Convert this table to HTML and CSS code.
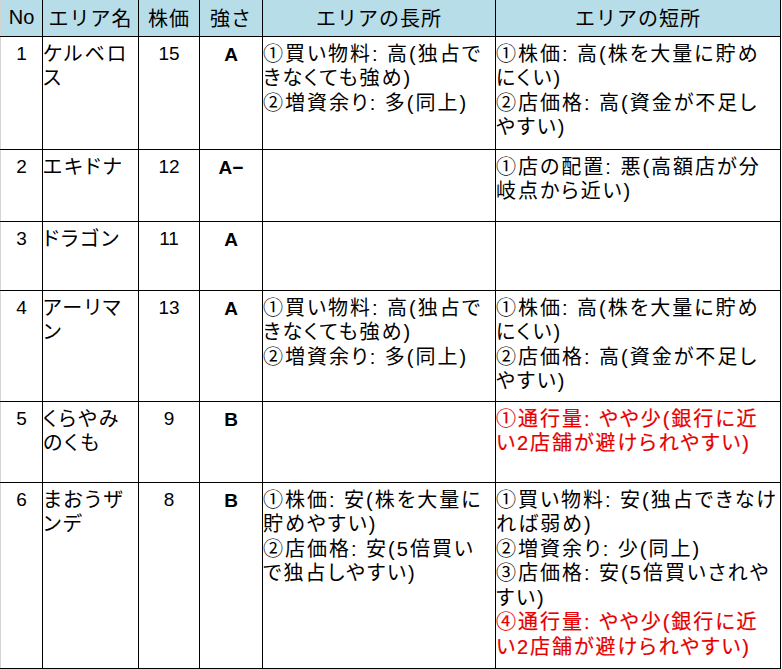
FILE: index.html
```html
<!DOCTYPE html>
<html lang="ja">
<head>
<meta charset="utf-8">
<title>エリア比較</title>
<link rel="stylesheet" href="styles.css">
</head>
<body>
<table class="sheet">
  <colgroup>
    <col class="c-no"><col class="c-name"><col class="c-price"><col class="c-rank"><col class="c-pro"><col class="c-con">
  </colgroup>
  <thead>
    <tr class="r-head">
      <th class="latin">No</th>
      <th>エリア名</th>
      <th>株価</th>
      <th>強さ</th>
      <th>エリアの長所</th>
      <th>エリアの短所</th>
    </tr>
  </thead>
  <tbody>
    <tr class="r1">
      <td class="num">1</td>
      <td class="txt">ケルベロ<br>ス</td>
      <td class="num">15</td>
      <td class="rank">A</td>
      <td class="txt">①買い物料: 高(独占で<br>きなくても強め)<br>②増資余り: 多(同上)</td>
      <td class="txt">①株価: 高(株を大量に貯め<br>にくい)<br>②店価格: 高(資金が不足し<br>やすい)</td>
    </tr>
    <tr class="r2">
      <td class="num">2</td>
      <td class="txt">エキドナ</td>
      <td class="num">12</td>
      <td class="rank">A−</td>
      <td class="txt"></td>
      <td class="txt">①店の配置: 悪(高額店が分<br>岐点から近い)</td>
    </tr>
    <tr class="r3">
      <td class="num">3</td>
      <td class="txt">ドラゴン</td>
      <td class="num">11</td>
      <td class="rank">A</td>
      <td class="txt"></td>
      <td class="txt"></td>
    </tr>
    <tr class="r4">
      <td class="num">4</td>
      <td class="txt">アーリマ<br>ン</td>
      <td class="num">13</td>
      <td class="rank">A</td>
      <td class="txt">①買い物料: 高(独占で<br>きなくても強め)<br>②増資余り: 多(同上)</td>
      <td class="txt">①株価: 高(株を大量に貯め<br>にくい)<br>②店価格: 高(資金が不足し<br>やすい)</td>
    </tr>
    <tr class="r5">
      <td class="num">5</td>
      <td class="txt">くらやみ<br>のくも</td>
      <td class="num">9</td>
      <td class="rank">B</td>
      <td class="txt"></td>
      <td class="txt"><span class="warn">①通行量: やや少(銀行に近<br>い2店舗が避けられやすい)</span></td>
    </tr>
    <tr class="r6">
      <td class="num">6</td>
      <td class="txt">まおうザ<br>ンデ</td>
      <td class="num">8</td>
      <td class="rank">B</td>
      <td class="txt">①株価: 安(株を大量に<br>貯めやすい)<br>②店価格: 安(5倍買い<br>で独占しやすい)</td>
      <td class="txt">①買い物料: 安(独占できなけ<br>れば弱め)<br>②増資余り: 少(同上)<br>③店価格: 安(5倍買いされや<br>すい)<br><span class="warn">④通行量: やや少(銀行に近<br>い2店舗が避けられやすい)</span></td>
    </tr>
  </tbody>
</table>
</body>
</html>
```

FILE: styles.css
```css
html, body {
  margin: 0;
  padding: 0;
  background: #ffffff;
}

.sheet {
  border-collapse: collapse;
  table-layout: fixed;
  width: 781px;
  font-family: "Liberation Sans", "Noto Sans CJK JP", sans-serif;
  font-size: 20px;
  color: #000;
  border-left: 1px solid #d4d4d4;
}

.c-no { width: 42px; }
.c-name { width: 96px; }
.c-price { width: 61px; }
.c-rank { width: 63px; }
.c-pro { width: 233px; }
.c-con { width: 285px; }

.sheet th,
.sheet td {
  border: 1px solid #000;
  padding: 0;
  overflow: hidden;
  white-space: nowrap;
}

.sheet th:first-child,
.sheet td:first-child {
  border-left: 1px solid #d4d4d4;
}

.sheet th {
  background: #b7dde8;
  font-weight: normal;
  text-align: center;
  vertical-align: middle;
  letter-spacing: 1px;
  border-top: none;
  padding-bottom: 1px;
}

.sheet th.latin {
  letter-spacing: 0;
}

.sheet td {
  vertical-align: top;
  line-height: 24.5px;
  padding-top: 5px;
}

.r-head { height: 36px; }
.r1 { height: 113px; }
.r2 { height: 72px; }
.r3 { height: 69px; }
.r4 { height: 111px; }
.r5 { height: 81px; }
.r6 { height: 186px; }

.num {
  text-align: center;
  font-size: 19px;
}

.txt {
  text-align: left;
  padding-left: 3px;
  letter-spacing: 2px;
  font-feature-settings: "palt";
}

.rank {
  text-align: center;
  font-weight: bold;
  font-size: 19px;
  padding-top: 6px !important;
}

.warn {
  color: #e60000;
  -webkit-text-stroke: 0.2px #e60000;
}
```
